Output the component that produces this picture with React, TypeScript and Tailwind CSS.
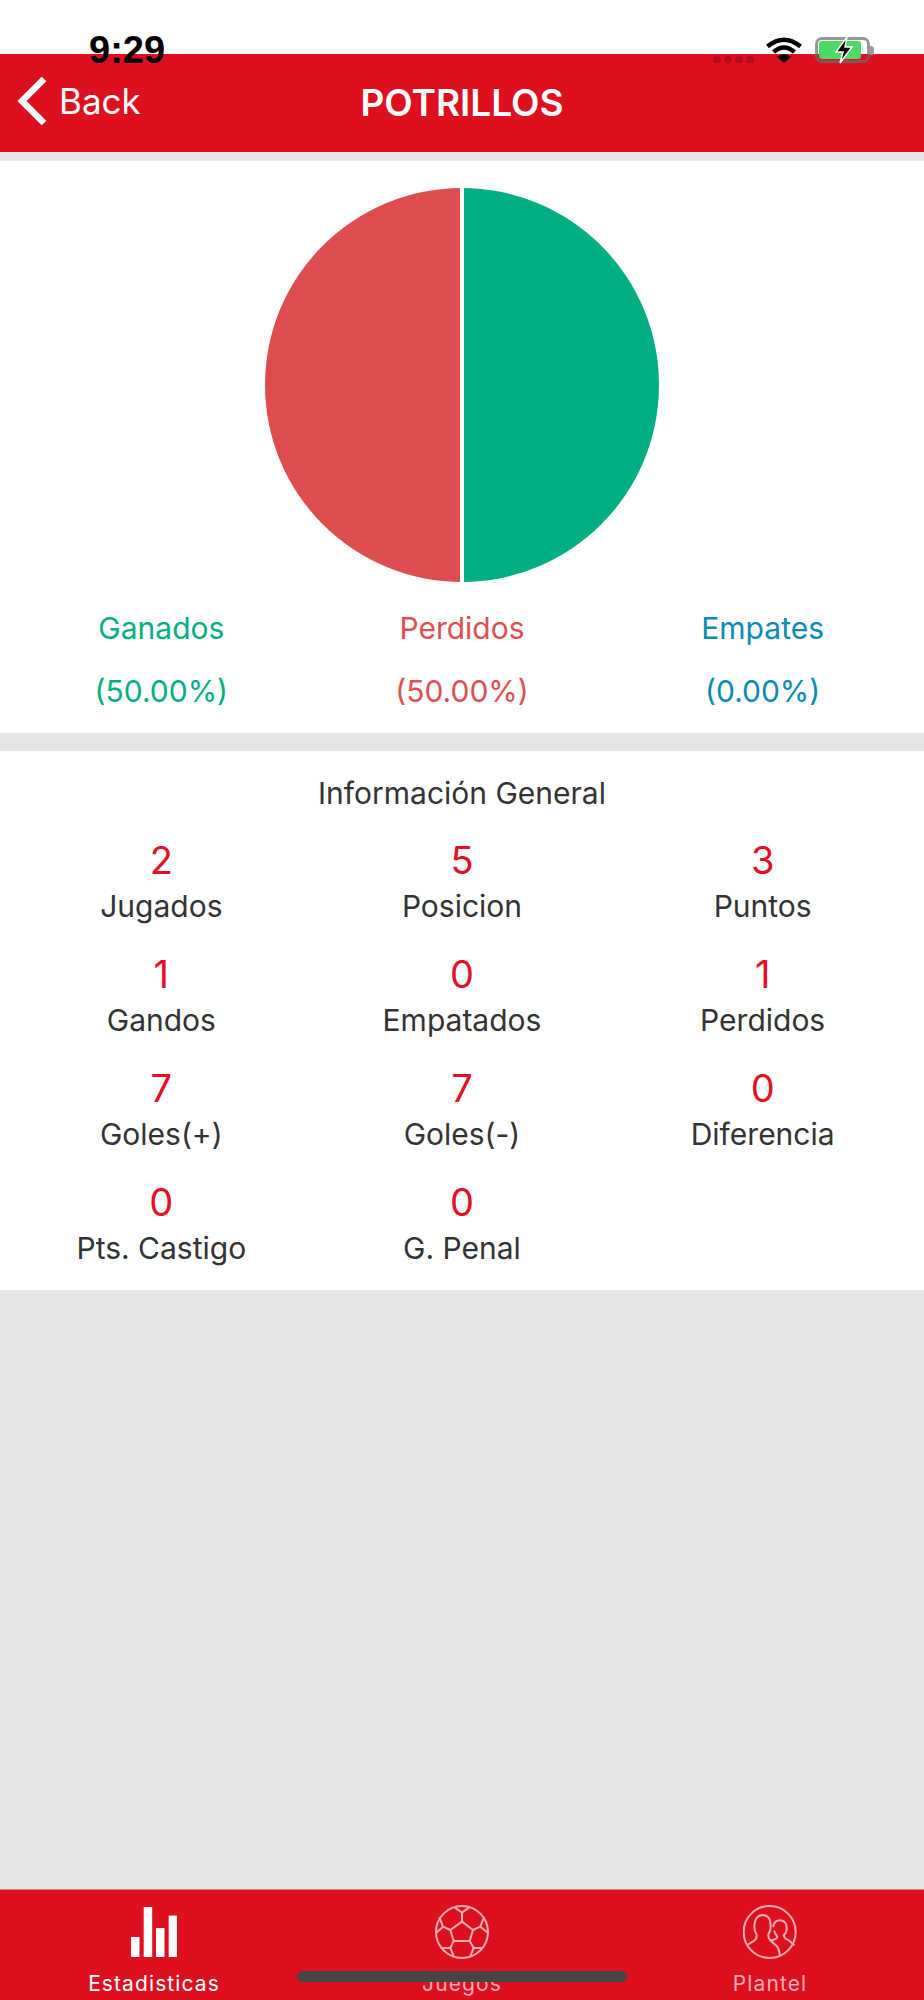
const font = { fontFamily: 'Inter, "Noto Sans", sans-serif' };

const legend = [
  { name: 'Ganados', pct: '(50.00%)', color: 'text-[#00ae84]' },
  { name: 'Perdidos', pct: '(50.00%)', color: 'text-[#e04f4f]' },
  { name: 'Empates', pct: '(0.00%)', color: 'text-[#0a8ab4]' },
];

const stats = [
  ['2', 'Jugados'],
  ['5', 'Posicion'],
  ['3', 'Puntos'],
  ['1', 'Gandos'],
  ['0', 'Empatados'],
  ['1', 'Perdidos'],
  ['7', 'Goles(+)'],
  ['7', 'Goles(-)'],
  ['0', 'Diferencia'],
  ['0', 'Pts. Castigo'],
  ['0', 'G. Penal'],
];

function PieChart() {
  return (
    <svg width="396" height="396" viewBox="0 0 396 396">
      <path d="M198 1 A197 197 0 0 1 198 395 Z" fill="#00ae84" />
      <path d="M198 1 A197 197 0 0 0 198 395 Z" fill="#de4d4d" />
      <rect x="196" y="0" width="4" height="396" fill="#ffffff" />
    </svg>
  );
}

function BackIcon() {
  return (
    <svg width="30" height="48" viewBox="0 0 30 48" fill="none" stroke="#ffffff" strokeWidth="6.5">
      <path d="M27 2 L5 24 L27 46" />
    </svg>
  );
}

function BarsIcon() {
  return (
    <svg width="46" height="50" viewBox="0 0 46 50" fill="#ffffff">
      <rect x="0" y="30" width="8.5" height="20" />
      <rect x="12.7" y="0" width="8.5" height="50" />
      <rect x="25" y="21" width="8.5" height="29" />
      <rect x="37.7" y="8.6" width="8.5" height="41.4" />
    </svg>
  );
}

function BallIcon() {
  return (
    <svg width="54" height="54" viewBox="104 47 162 162" fill="none" stroke="#f7adb2" strokeWidth="6" strokeLinejoin="round">
      <circle cx="185" cy="128" r="78" />
      <path d="M163 54 L185 70 L207 54 M185 70 V97" />
      <path d="M185 97 L218 122 L208 155 H160 L150 122 Z" />
      <path d="M150 122 L128 112 L117 83 M128 112 L108 130" />
      <path d="M218 122 L240 112 L251 83 M240 112 L262 130" />
      <path d="M160 155 L150 176 L160 200 M150 176 H121" />
      <path d="M208 155 L220 176 L210 200 M220 176 H249" />
    </svg>
  );
}

function PeopleIcon() {
  return (
    <svg width="54" height="54" viewBox="130 47 162 162" fill="none" stroke="#f7adb2" strokeWidth="6" strokeLinejoin="round" strokeLinecap="round">
      <circle cx="210" cy="128" r="78" />
      <path d="M143 167 L165 153 Q172 148 171 136 Q163 124 164 108 Q166 78 189 77 Q212 78 213 106 Q214 124 206 136 Q205 148 214 155 L231 170 Q240 180 240 200" />
      <path d="M221 111 Q224 93 241 93 Q260 94 261 114 Q262 130 252 138 Q254 148 266 152 L283 166" />
      <path d="M217 152 Q232 150 233 141 Q226 134 224 126" />
    </svg>
  );
}

function WifiIcon() {
  return (
    <svg width="36" height="26" viewBox="0 0 36 26" fill="none" stroke="#000000" strokeWidth="4.5">
      <path d="M1.5 9.5 Q18 -4 34.5 9.5" />
      <path d="M7.5 15 Q18 6 28.5 15" />
      <path d="M18 26 L11 19.5 Q18 14.5 25 19.5 Z" fill="#000000" stroke="none" />
    </svg>
  );
}

function BatteryIcon() {
  return (
    <div className="relative w-[55px] h-[26px] rounded-[7px] border-[3px] border-[#6b6b6b]/70">
      <div className="absolute left-[1px] top-[1px] w-[42px] h-[18px] rounded-[3px] bg-[#4cd964]" />
      <div className="absolute -right-[7px] top-[6px] w-[4px] h-[9px] rounded-r-[3px] bg-[#9a9a9a]" />
      <svg className="absolute left-[14px] -top-[4px]" width="24" height="28" viewBox="0 0 24 28">
        <path d="M15 1 L4 16 H11 L8 27 L20 11 H13 Z" fill="#000000" stroke="#ffffff" strokeWidth="1.5" />
      </svg>
    </div>
  );
}

export default function App() {
  return (
    <div className="relative w-[924px] h-[2000px] flex flex-col bg-[#e5e5e5] overflow-hidden" style={font}>
      <div className="h-[54px] bg-white" />

      {/* nav bar */}
      <div className="relative h-[98px] bg-[#dc101f] flex items-center justify-center">
        <div className="absolute left-[17px] top-[23px] flex items-center text-white">
          <BackIcon />
          <span className="text-[35px] leading-[48px] ml-[12px]">Back</span>
        </div>
        <h1 className="text-[37px] leading-[52px] font-semibold text-white -mt-[1px]">POTRILLOS</h1>
      </div>

      <div className="mt-[9px] bg-white">
        <div className="flex justify-center pt-[26px]">
          <PieChart />
        </div>
        <div className="grid grid-cols-3 px-[11px] pt-[23px] pb-[20px] text-[30px] leading-[44px] text-center">
          {legend.map((item) => (
            <div key={item.name} className={`flex flex-col gap-[19px] ${item.color}`}>
              <span>{item.name}</span>
              <span>{item.pct}</span>
            </div>
          ))}
        </div>
      </div>

      <div className="mt-[18px] bg-white pt-[20px] h-[539px]">
        <h2 className="text-center text-[30px] leading-[44px] text-[#333333]">Información General</h2>
        <div className="grid grid-cols-3 px-[11px] mt-[22px] text-center">
          {stats.map(([value, label]) => (
            <div key={label} className="flex flex-col h-[114px]">
              <span className="text-[38px] leading-[46px] text-[#e30f24]">{value}</span>
              <span className="text-[30px] leading-[44px] mt-[1px] text-[#333333]">{label}</span>
            </div>
          ))}
        </div>
      </div>

      {/* tab bar */}
      <div className="mt-auto h-[111px] bg-[#dc101f] border-t border-[#d98088] grid grid-cols-3 text-center text-[21px] leading-[24px] tracking-[1.1px]">
        <div className="flex flex-col items-center text-white">
          <div className="h-[54px] mt-[17px] flex items-start">
            <BarsIcon />
          </div>
          <span className="mt-[11px]">Estadisticas</span>
        </div>
        <div className="flex flex-col items-center text-[#f7adb2]">
          <div className="h-[54px] mt-[15px]">
            <BallIcon />
          </div>
          <span className="mt-[13px]">Juegos</span>
        </div>
        <div className="flex flex-col items-center text-[#f7adb2]">
          <div className="h-[54px] mt-[15px]">
            <PeopleIcon />
          </div>
          <span className="mt-[13px]">Plantel</span>
        </div>
      </div>

      {/* status bar, drawn over the nav bar */}
      <div className="absolute z-10 left-[89px] top-[29px] text-[38px] leading-[42px] font-bold text-black" style={{ fontFamily: '"Liberation Sans", sans-serif' }}>
        9:29
      </div>
      <div className="absolute z-10 left-[713px] top-[37px] flex items-center">
        <div className="flex gap-[3px] mt-[19px]">
          <div className="w-[8px] h-[7px] rounded-[3px] bg-[#b30d1a]" />
          <div className="w-[8px] h-[7px] rounded-[3px] bg-[#b30d1a]" />
          <div className="w-[8px] h-[7px] rounded-[3px] bg-[#b30d1a]" />
          <div className="w-[8px] h-[7px] rounded-[3px] bg-[#b30d1a]" />
        </div>
        <div className="ml-[12px]">
          <WifiIcon />
        </div>
        <div className="ml-[13px]">
          <BatteryIcon />
        </div>
      </div>

      {/* home indicator */}
      <div className="absolute z-10 left-[297px] top-[1971px] w-[330px] h-[11px] rounded-full bg-[#464646]" />
    </div>
  );
}
